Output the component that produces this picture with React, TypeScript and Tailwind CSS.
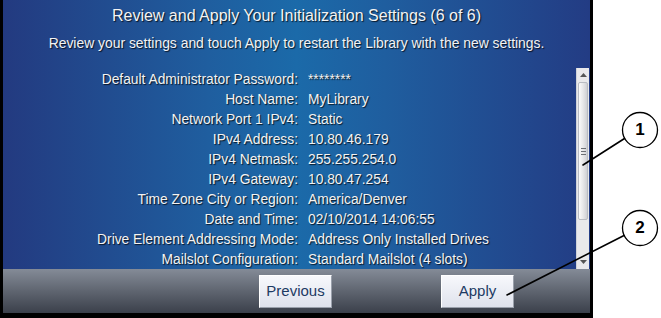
import React from "react";

const settings: [string, string][] = [
  ["Default Administrator Password:", "********"],
  ["Host Name:", "MyLibrary"],
  ["Network Port 1 IPv4:", "Static"],
  ["IPv4 Address:", "10.80.46.179"],
  ["IPv4 Netmask:", "255.255.254.0"],
  ["IPv4 Gateway:", "10.80.47.254"],
  ["Time Zone City or Region:", "America/Denver"],
  ["Date and Time:", "02/10/2014 14:06:55"],
  ["Drive Element Addressing Mode:", "Address Only Installed Drives"],
  ["Mailslot Configuration:", "Standard Mailslot (4 slots)"],
];

const shadow = "[text-shadow:1px_1px_1px_rgba(0,0,0,0.75)]";

const Scrollbar = () => (
  <div className="w-[13px] mr-[1px] flex flex-col bg-[#e9e9eb] border-l border-[#cfd2d8]">
    <div className="h-[14px] flex items-center justify-center">
      <svg width="7" height="4" viewBox="0 0 7 4">
        <path d="M3.5 0 L7 4 L0 4 Z" fill="#555" />
      </svg>
    </div>
    <div className="h-[138px] mx-[1px] flex items-center justify-center rounded-[2px] border border-[#b9bcc2] bg-[linear-gradient(to_right,#fbfbfb,#e3e3e5_60%,#cfd0d4)]">
      <div className="flex flex-col gap-[2px]">
        <div className="w-[5px] h-px bg-[#6b6e74]" />
        <div className="w-[5px] h-px bg-[#6b6e74]" />
        <div className="w-[5px] h-px bg-[#6b6e74]" />
      </div>
    </div>
    <div className="flex-1" />
    <div className="h-[14px] flex items-center justify-center">
      <svg width="7" height="4" viewBox="0 0 7 4">
        <path d="M0 0 L7 0 L3.5 4 Z" fill="#555" />
      </svg>
    </div>
  </div>
);

const Button = ({ label }: { label: string }) => (
  <button className="w-[73px] h-[33px] flex items-center justify-center border border-[#9aa0ab] border-t-white border-l-white bg-[linear-gradient(to_bottom,#f7f8fc,#dfe2ec)] text-[15px] text-[#1d3a63]">
    {label}
  </button>
);

export default function App() {
  return (
    <div
      className="relative w-[661px] h-[318px] bg-white overflow-hidden"
      style={{ fontFamily: '"Liberation Sans", Arial, sans-serif' }}
    >
      <div className="w-[593px] h-[318px] bg-black pl-[3px] pr-[3px] pb-[5px]">
        <div className="h-full flex flex-col">
          <div className="h-[269px] flex flex-col bg-[linear-gradient(to_right,#233a80,#1f5e9f_35%,#1b6aa9_50%,#1f5e9f_65%,#233c84)] text-[#f3f3f3]">
            <div className={`pt-[6px] h-[30px] text-center text-[16px] leading-[20px] ${shadow}`}>
              Review and Apply Your Initialization Settings (6 of 6)
            </div>
            <div className={`pt-[4px] h-[38px] text-center text-[13.9px] leading-[18px] ${shadow}`}>
              Review your settings and touch Apply to restart the Library with the new settings.
            </div>
            <div className="flex-1 flex min-h-0">
              <div className="flex-1 overflow-hidden pt-[2px]">
                <div className="grid grid-cols-[295px_1fr] gap-x-[10px]">
                  {settings.map(([label, value]) => (
                    <React.Fragment key={label}>
                      <div className={`text-right text-[13.8px] leading-[20px] ${shadow}`}>{label}</div>
                      <div className={`text-[13.8px] leading-[20px] ${shadow}`}>{value}</div>
                    </React.Fragment>
                  ))}
                </div>
              </div>
              <Scrollbar />
            </div>
          </div>
          <div className="flex-1 flex items-center bg-[linear-gradient(to_bottom,#848b97,#5f6570_50%,#3b404b)]">
            <div className="ml-[256px]">
              <Button label="Previous" />
            </div>
            <div className="ml-[109px]">
              <Button label="Apply" />
            </div>
          </div>
        </div>
      </div>

      {/* callouts */}
      <svg className="absolute left-0 top-0" width="661" height="318" viewBox="0 0 661 318">
        <g fill="white" stroke="black" strokeWidth="1.3">
          <circle cx="640" cy="130" r="17.5" />
          <circle cx="640" cy="228" r="17.5" />
        </g>
        <g stroke="black" strokeWidth="1.6" strokeLinecap="round">
          <line x1="624.5" y1="138.5" x2="583" y2="165" />
          <line x1="624" y1="235.5" x2="507" y2="295" />
        </g>
      </svg>
      <div className="absolute left-[622px] top-[112px] w-[36px] h-[36px] flex items-center justify-center text-[17px] font-bold text-black">
        1
      </div>
      <div className="absolute left-[622px] top-[210px] w-[36px] h-[36px] flex items-center justify-center text-[17px] font-bold text-black">
        2
      </div>
    </div>
  );
}
